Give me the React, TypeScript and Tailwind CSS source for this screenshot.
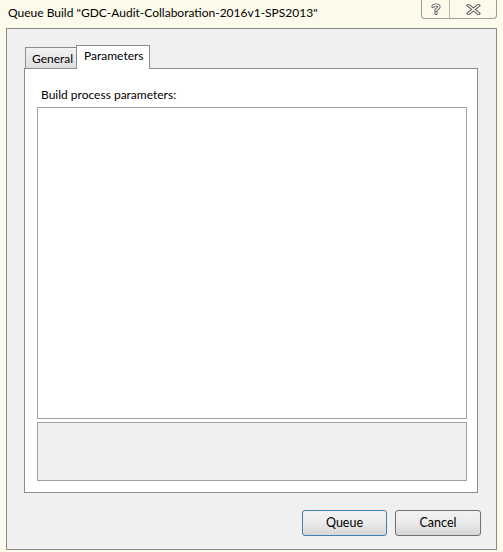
import React from 'react';

const font = { fontFamily: 'Lato, "Noto Sans", sans-serif' };

const HelpGlyph = () => (
    <svg width="10" height="12" viewBox="0 0 10 12">
        <path d="M2 3.5 C2 1.5 8 1.5 8 3.8 C8 5.6 5 5.6 5 7.6 M5 9.6 L5 10.6" fill="none" stroke="#5a5a5a" strokeWidth="3.2" strokeLinecap="round" />
        <path d="M2 3.5 C2 1.5 8 1.5 8 3.8 C8 5.6 5 5.6 5 7.6 M5 9.6 L5 10.6" fill="none" stroke="#ffffff" strokeWidth="1.4" strokeLinecap="round" />
    </svg>
);

const CloseGlyph = () => (
    <svg width="15" height="11" viewBox="0 0 15 11">
        <path d="M2.5 1.5 L12.5 9.5 M12.5 1.5 L2.5 9.5" fill="none" stroke="#5a5a5a" strokeWidth="3.4" strokeLinecap="square" />
        <path d="M2.5 1.5 L12.5 9.5 M12.5 1.5 L2.5 9.5" fill="none" stroke="#ffffff" strokeWidth="1.4" strokeLinecap="square" />
    </svg>
);

const DialogButton: React.FC<{ label: string; focused?: boolean }> = ({ label, focused }) => (
    <button
        className={
            focused
                ? 'w-[85px] h-[26px] rounded-[3px] border border-[#3c7fb1] bg-gradient-to-b from-[#f2f2f2] via-[#ebebeb] to-[#d6d6d6] text-[12.5px] text-black'
                : 'w-[86px] h-[26px] rounded-[3px] border border-[#707070] bg-gradient-to-b from-[#f2f2f2] via-[#ebebeb] to-[#d6d6d6] text-[12.5px] text-black'
        }
    >
        {label}
    </button>
);

export default function App() {
    return (
        <div className="relative w-[503px] h-[552px] overflow-hidden bg-[#fcfaea] text-black" style={font}>
            {/* title bar */}
            <div className="h-[28px] pl-[8px] pt-[4px] text-[12px] leading-[18px] text-black">
                Queue Build "GDC-Audit-Collaboration-2016v1-SPS2013"
            </div>
            <div className="absolute top-0 left-[421px] flex h-[19px] rounded-b-[4px] border border-t-0 border-[#9a9a9a]">
                <div className="flex w-[28px] items-center justify-center border-r border-[#b5b5b5]">
                    <HelpGlyph />
                </div>
                <div className="flex w-[46px] items-center justify-center">
                    <CloseGlyph />
                </div>
            </div>

            {/* client area */}
            <div className="ml-[6px] w-[491px] h-[522px] border border-[#8a8a8a] bg-[#f0f0f0]">
                <div className="pl-[17px] pt-[16px]">
                    {/* tabs */}
                    <div className="flex items-end pl-[1px]">
                        <div className="h-[21px] w-[52px] border border-b-0 border-[#898c95] bg-gradient-to-b from-[#f2f2f2] to-[#dedede] pl-[6px] pt-[2px] text-[12px] leading-[18px]">
                            General
                        </div>
                        <div className="relative z-10 -mb-px h-[24px] w-[74px] -ml-px border border-b-0 border-[#898c95] bg-white pl-[7px] pt-[1px] text-[12px] leading-[18px]">
                            Parameters
                        </div>
                    </div>

                    {/* tab page */}
                    <div className="w-[454px] h-[425px] border border-[#898c95] bg-white pl-[12px] pt-[17px]">
                        <div className="pl-[4px] text-[12px] leading-[18px]">Build process parameters:</div>
                        <div className="mt-[3px] w-[430px] h-[312px] border border-[#a0a0a0] bg-white" />
                        <div className="mt-[3px] w-[430px] h-[59px] border border-[#a0a0a0] bg-[#f0f0f0]" />
                    </div>

                    {/* buttons */}
                    <div className="mt-[17px] flex w-[457px] justify-end gap-[8px]">
                        <DialogButton label="Queue" focused />
                        <DialogButton label="Cancel" />
                    </div>
                </div>
            </div>
        </div>
    );
}
